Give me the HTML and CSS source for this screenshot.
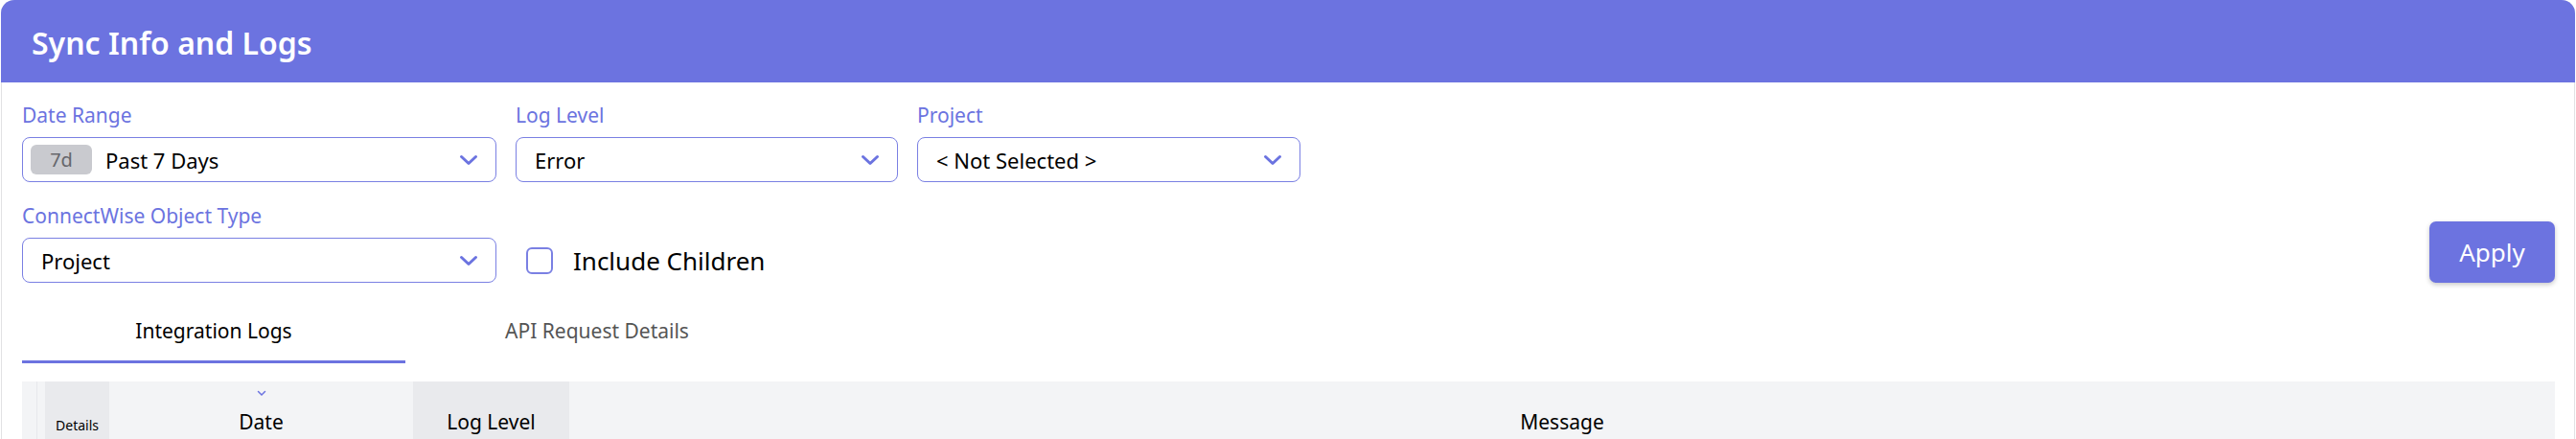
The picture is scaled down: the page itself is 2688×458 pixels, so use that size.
FILE: index.html
```html
<!DOCTYPE html>
<html lang="en">
<head>
<meta charset="utf-8">
<title>Sync Info and Logs</title>
<link rel="stylesheet" href="styles.css">
</head>
<body>
<div class="card">
  <div class="card-header">
    <h1 class="card-title">Sync Info and Logs</h1>
  </div>
  <div class="card-body">
    <div class="filter-row">
      <div class="field field-wide">
        <label class="field-label">Date Range</label>
        <div class="select">
          <span class="badge">7d</span>
          <span class="select-value">Past 7 Days</span>
          <svg class="chevron" width="20" height="12" viewBox="0 0 20 12"><polyline points="2.5,2.5 10,9.5 17.5,2.5" fill="none" stroke="#6b73e0" stroke-width="3" stroke-linecap="round" stroke-linejoin="round"/></svg>
        </div>
      </div>
      <div class="field field-mid">
        <label class="field-label">Log Level</label>
        <div class="select select-pad">
          <span class="select-value">Error</span>
          <svg class="chevron" width="20" height="12" viewBox="0 0 20 12"><polyline points="2.5,2.5 10,9.5 17.5,2.5" fill="none" stroke="#6b73e0" stroke-width="3" stroke-linecap="round" stroke-linejoin="round"/></svg>
        </div>
      </div>
      <div class="field field-proj">
        <label class="field-label">Project</label>
        <div class="select select-pad">
          <span class="select-value">&lt; Not Selected &gt;</span>
          <svg class="chevron" width="20" height="12" viewBox="0 0 20 12"><polyline points="2.5,2.5 10,9.5 17.5,2.5" fill="none" stroke="#6b73e0" stroke-width="3" stroke-linecap="round" stroke-linejoin="round"/></svg>
        </div>
      </div>
    </div>

    <div class="filter-row filter-row-2">
      <div class="field field-wide">
        <label class="field-label">ConnectWise Object Type</label>
        <div class="select select-pad">
          <span class="select-value">Project</span>
          <svg class="chevron" width="20" height="12" viewBox="0 0 20 12"><polyline points="2.5,2.5 10,9.5 17.5,2.5" fill="none" stroke="#6b73e0" stroke-width="3" stroke-linecap="round" stroke-linejoin="round"/></svg>
        </div>
      </div>
      <div class="check-group">
        <span class="checkbox"></span>
        <span class="check-label">Include Children</span>
      </div>
      <button class="apply-btn">Apply</button>
    </div>

    <div class="tabs">
      <div class="tab tab-active">Integration Logs</div>
      <div class="tab">API Request Details</div>
    </div>

    <div class="grid-table">
      <div class="th th-select"></div>
      <div class="th th-details"><span class="details-cell">Details</span></div>
      <div class="th th-date">
        <svg class="sort-icon" width="10" height="7" viewBox="0 0 10 7"><polyline points="1.5,1.5 5,5 8.5,1.5" fill="none" stroke="#6b73e0" stroke-width="1.5" stroke-linecap="round"/></svg>
        <span>Date</span>
      </div>
      <div class="th th-level">Log Level</div>
      <div class="th th-message">Message</div>
    </div>
  </div>
</div>
</body>
</html>
```

FILE: styles.css
```css
* {
  box-sizing: border-box;
}

html, body {
  margin: 0;
  padding: 0;
  background: #ffffff;
  font-family: "Noto Sans", "Open Sans", sans-serif;
  color: #111111;
  overflow: hidden;
}

.card {
  margin: 0 1px;
  border: 1px solid #e2e2e4;
  border-top: none;
  border-radius: 14px 14px 0 0;
  background: #ffffff;
}

.card-header {
  height: 86px;
  background: #6c73e0;
  border-radius: 14px 14px 0 0;
  display: flex;
  align-items: center;
  padding-left: 32px;
  margin: 0 -1px;
}

.card-title {
  margin: 0;
  font-size: 32px;
  font-weight: 600;
  line-height: 1;
  color: #ffffff;
  padding-top: 4px;
}

.card-body {
  padding: 20px 20px 0 21px;
}

.filter-row {
  display: flex;
  gap: 20px;
  align-items: flex-end;
}

.filter-row-2 {
  margin-top: 21px;
}

.field {
  display: flex;
  flex-direction: column;
}

.field-wide { width: 495px; }
.field-mid { width: 399px; }
.field-proj { width: 400px; }

.field-label {
  font-size: 21px;
  line-height: 28px;
  color: #6b73e0;
  margin-bottom: 9px;
}

.select {
  height: 47px;
  border: 1.5px solid #7a80e3;
  border-radius: 8px;
  display: flex;
  align-items: center;
  padding: 0 18px 0 8px;
}

.select-pad {
  padding-left: 19px;
}

.badge {
  width: 64px;
  height: 31px;
  border-radius: 6px;
  background: #c9cacf;
  color: #66676c;
  font-size: 20px;
  display: flex;
  align-items: center;
  justify-content: center;
  margin-right: 14px;
}

.select-value {
  font-size: 22px;
  color: #000000;
  flex: 1;
  line-height: 1;
}

.chevron {
  flex: none;
}

.check-group {
  height: 47px;
  display: flex;
  align-items: center;
  margin-left: 11px;
}

.checkbox {
  width: 28px;
  height: 28px;
  border: 2px solid #7a80e3;
  border-radius: 6px;
  background: #ffffff;
}

.check-label {
  font-size: 26px;
  margin-left: 21px;
  color: #000000;
}

.apply-btn {
  margin-left: auto;
  width: 131px;
  height: 64px;
  border: none;
  border-radius: 7px;
  background: #6c73e0;
  color: #ffffff;
  font-family: "Noto Sans", sans-serif;
  font-size: 26px;
  box-shadow: 0 2px 5px rgba(0, 0, 0, 0.22);
}

.tabs {
  display: flex;
  margin-top: 16px;
}

.tab {
  width: 400px;
  height: 68px;
  padding-top: 3px;
  display: flex;
  align-items: center;
  justify-content: center;
  font-size: 21px;
  color: #555555;
  border-bottom: 3px solid transparent;
}

.tab-active {
  color: #000000;
  border-bottom-color: #6c73e0;
}

.grid-table {
  margin-top: 19px;
  display: grid;
  grid-template-columns: 16px 75px 317px 163px 1fr;
  height: 80px;
  background: #f3f4f6;
}

.th {
  display: flex;
  align-items: center;
  justify-content: center;
  font-size: 21px;
  color: #000000;
  padding-top: 4px;
}

.th-select {
  border-right: 1px solid #e7e8eb;
}

.th-details {
  padding: 0 0 0 8px;
  align-items: stretch;
}

.details-cell {
  flex: 1;
  background: #e9eaed;
  font-size: 14px;
  display: flex;
  align-items: center;
  justify-content: center;
  padding-top: 10px;
}

.th-date {
  position: relative;
}

.sort-icon {
  position: absolute;
  top: 9px;
  left: 50%;
  margin-left: -5px;
}

.th-level {
  background: #e9eaed;
}
```
